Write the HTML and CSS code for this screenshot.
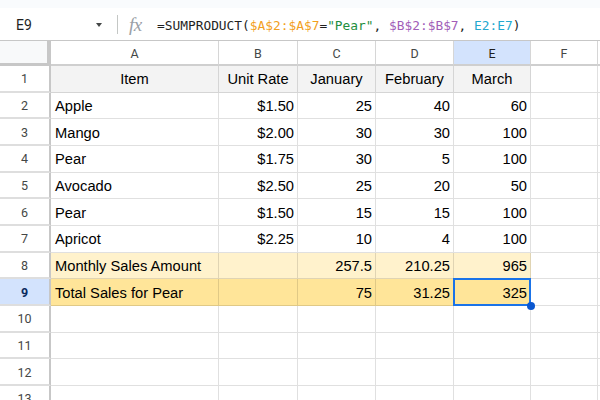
FILE: index.html
```html
<!DOCTYPE html>
<html>
<head>
<meta charset="utf-8">
<link rel="stylesheet" href="styles.css">
</head>
<body>
<div class="topstrip"></div>
<div class="formula-bar">
  <div class="namebox"><span class="name">E9</span><span class="caret"></span></div>
  <div class="sep"></div>
  <div class="fx">fx</div>
  <div class="formula">=SUMPRODUCT(<span class="f-or">$A$2:$A$7</span>=<span class="f-gr">"Pear"</span>, <span class="f-pu">$B$2:$B$7</span>, <span class="f-cy">E2:E7</span>)</div>
</div>
<div class="sheet">
  <div class="corner"></div>
  <div class="colh">A</div><div class="colh">B</div><div class="colh">C</div><div class="colh">D</div><div class="colh sel">E</div><div class="colh">F</div><div class="colh last"></div>

  <div class="rowh">1</div>
  <div class="c hdr ctr">Item</div><div class="c hdr ctr">Unit Rate</div><div class="c hdr ctr">January</div><div class="c hdr ctr">February</div><div class="c hdr ctr">March</div><div class="c"></div><div class="c"></div>

  <div class="rowh">2</div>
  <div class="c">Apple</div><div class="c num">$1.50</div><div class="c num">25</div><div class="c num">40</div><div class="c num">60</div><div class="c"></div><div class="c"></div>

  <div class="rowh">3</div>
  <div class="c">Mango</div><div class="c num">$2.00</div><div class="c num">30</div><div class="c num">30</div><div class="c num">100</div><div class="c"></div><div class="c"></div>

  <div class="rowh">4</div>
  <div class="c">Pear</div><div class="c num">$1.75</div><div class="c num">30</div><div class="c num">5</div><div class="c num">100</div><div class="c"></div><div class="c"></div>

  <div class="rowh">5</div>
  <div class="c">Avocado</div><div class="c num">$2.50</div><div class="c num">25</div><div class="c num">20</div><div class="c num">50</div><div class="c"></div><div class="c"></div>

  <div class="rowh">6</div>
  <div class="c">Pear</div><div class="c num">$1.50</div><div class="c num">15</div><div class="c num">15</div><div class="c num">100</div><div class="c"></div><div class="c"></div>

  <div class="rowh">7</div>
  <div class="c">Apricot</div><div class="c num">$2.25</div><div class="c num">10</div><div class="c num">4</div><div class="c num">100</div><div class="c"></div><div class="c"></div>

  <div class="rowh">8</div>
  <div class="c monthly">Monthly Sales Amount</div><div class="c monthly"></div><div class="c num monthly">257.5</div><div class="c num monthly">210.25</div><div class="c num monthly">965</div><div class="c"></div><div class="c"></div>

  <div class="rowh sel">9</div>
  <div class="c total">Total Sales for Pear</div><div class="c total"></div><div class="c num total">75</div><div class="c num total">31.25</div><div class="c num total active">325</div><div class="c"></div><div class="c"></div>

  <div class="rowh">10</div>
  <div class="c"></div><div class="c"></div><div class="c"></div><div class="c"></div><div class="c"></div><div class="c"></div><div class="c"></div>

  <div class="rowh">11</div>
  <div class="c"></div><div class="c"></div><div class="c"></div><div class="c"></div><div class="c"></div><div class="c"></div><div class="c"></div>

  <div class="rowh">12</div>
  <div class="c"></div><div class="c"></div><div class="c"></div><div class="c"></div><div class="c"></div><div class="c"></div><div class="c"></div>

  <div class="rowh">13</div>
  <div class="c"></div><div class="c"></div><div class="c"></div><div class="c"></div><div class="c"></div><div class="c"></div><div class="c"></div>
</div>
</body>
</html>
```
FILE: styles.css
```css
html, body {
  margin: 0;
  padding: 0;
  width: 600px;
  height: 400px;
  overflow: hidden;
  background: #ffffff;
}

.topstrip {
  height: 8px;
  background: #f9fbfd;
}

.formula-bar {
  height: 32px;
  border-bottom: 1px solid #c7c7c7;
  display: flex;
  align-items: center;
  padding-left: 16px;
  background: #ffffff;
}

.namebox {
  width: 86px;
  display: flex;
  align-items: center;
  justify-content: space-between;
  padding-top: 1px;
}

.name {
  font-family: Roboto, "Liberation Sans", sans-serif;
  font-size: 14px;
  color: #1f1f1f;
}

.caret {
  width: 0;
  height: 0;
  border-left: 3.5px solid transparent;
  border-right: 3.5px solid transparent;
  border-top: 4px solid #444746;
  margin-top: 1px;
}

.sep {
  width: 1px;
  height: 19px;
  background: #c4c7c5;
  margin-left: 15px;
}

.fx {
  width: 28px;
  margin-left: 11px;
  font-family: "Liberation Serif", serif;
  font-style: italic;
  font-size: 19px;
  color: #9aa0a6;
  line-height: 1;
  letter-spacing: -0.5px;
}

.formula {
  font-family: "DejaVu Sans Mono", monospace;
  font-size: 12.85px;
  color: #1f1f1f;
  white-space: pre;
  margin-top: 2px;
}

.f-or { color: #f29f1d; }
.f-gr { color: #1e8e3e; }
.f-pu { color: #a15db8; }
.f-cy { color: #23a8cf; }

.sheet {
  display: grid;
  grid-template-columns: 51px 168px 79px 78px 78px 77px 67px 1fr;
  grid-template-rows: 25px repeat(13, 26.667px);
}

.corner {
  background: #f8f9fa;
  border-right: 4px solid #c7c7c7;
  border-bottom: 3px solid #c7c7c7;
}

.colh {
  display: flex;
  align-items: center;
  justify-content: center;
  font-family: Roboto, "Liberation Sans", sans-serif;
  font-size: 12.5px;
  color: #444746;
  border-right: 1px solid #d6d6d6;
  border-bottom: 2px solid #cfcfcf;
  padding-top: 2px;
}

.colh.sel {
  background: #d3e3fd;
  color: #1f1f1f;
}

.colh.last {
  border-right: none;
}

.rowh {
  display: flex;
  align-items: center;
  justify-content: center;
  font-family: Roboto, "Liberation Sans", sans-serif;
  font-size: 12.5px;
  color: #444746;
  border-right: 2px solid #c7c7c7;
  border-bottom: 2px solid #dedede;
  padding-top: 1px;
}

.rowh.sel {
  background: #d3e3fd;
  color: #0a2a5e;
  font-weight: 700;
}

.c {
  display: flex;
  align-items: center;
  box-sizing: border-box;
  border-right: 1px solid rgba(0, 0, 0, 0.12);
  border-bottom: 1px solid rgba(0, 0, 0, 0.12);
  padding: 1px 3px 0 4px;
  font-family: "Liberation Sans", Arial, sans-serif;
  font-size: 14.7px;
  color: #000000;
  white-space: nowrap;
  overflow: visible;
}

.c.num {
  justify-content: flex-end;
}

.c.ctr {
  justify-content: center;
  padding: 1px 0 0 0;
}

.c.hdr {
  background: #f3f3f3;
}

.c.monthly {
  background: #fff2cc;
}

.c.total {
  background: #ffe599;
}

.c.active {
  position: relative;
}

.c.active::before {
  content: "";
  position: absolute;
  top: -1px;
  left: -1px;
  right: -1px;
  bottom: -1px;
  border: 2px solid #1a73e8;
}

.c.active::after {
  content: "";
  position: absolute;
  right: -5px;
  bottom: -5px;
  width: 8px;
  height: 8px;
  border-radius: 50%;
  background: #0b57d0;
}
```
